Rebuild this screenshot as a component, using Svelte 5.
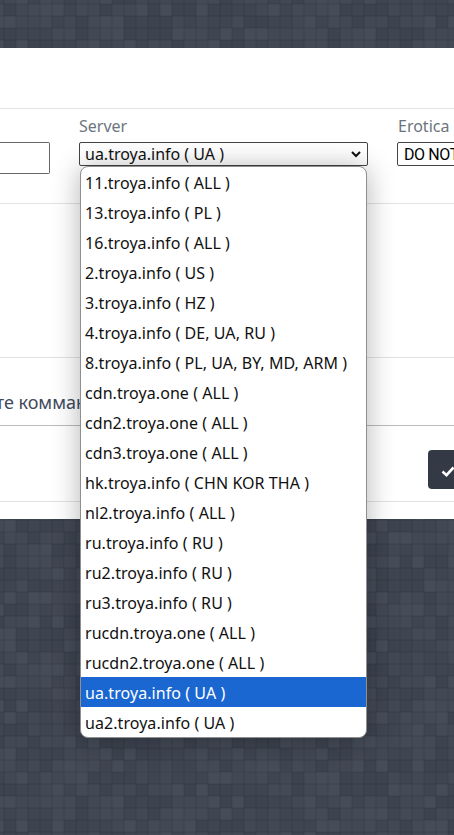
<script lang="ts">
    const servers = [
        "11.troya.info ( ALL )",
        "13.troya.info ( PL )",
        "16.troya.info ( ALL )",
        "2.troya.info ( US )",
        "3.troya.info ( HZ )",
        "4.troya.info ( DE, UA, RU )",
        "8.troya.info ( PL, UA, BY, MD, ARM )",
        "cdn.troya.one ( ALL )",
        "cdn2.troya.one ( ALL )",
        "cdn3.troya.one ( ALL )",
        "hk.troya.info ( CHN KOR THA )",
        "nl2.troya.info ( ALL )",
        "ru.troya.info ( RU )",
        "ru2.troya.info ( RU )",
        "ru3.troya.info ( RU )",
        "rucdn.troya.one ( ALL )",
        "rucdn2.troya.one ( ALL )",
        "ua.troya.info ( UA )",
        "ua2.troya.info ( UA )"
    ]
    const selected = "ua.troya.info ( UA )"

    // background squares, fixed pseudo random shades
    const shades = ["#3f4652", "#424955", "#444b57", "#3d4450", "#464d59"]
    let cells = []
    for(let i = 0; i < 72 * 39; i++) {
        cells.push(shades[(i * 7 + (i % 11) * (i % 5) + (i % 3) * 13) % 5])
    }
</script>

<div class="page">
    <div class="squares">
        {#each cells as c}
            <i style="background:{c}"></i>
        {/each}
    </div>

    <div class="panel">
        <div class="row head"></div>
        <div class="row fields">
            <div class="field first">
                <div class="box"></div>
            </div>
            <div class="field server">
                <span class="label">Server</span>
                <div class="select">
                    <span>ua.troya.info ( UA )</span>
                    <svg width="10" height="7" viewBox="0 0 10 7"><path d="M1 1l4 4 4-4" fill="none" stroke="#111" stroke-width="2"/></svg>
                </div>
            </div>
            <div class="field erotica">
                <span class="label">Erotica</span>
                <div class="select"><span>DO NOT SHOW</span></div>
            </div>
        </div>
        <div class="row empty"></div>
        <div class="row hint"><span>Введите комманду</span></div>
        <div class="row actions">
            <div class="ok">
                <svg width="14" height="11" viewBox="0 0 14 11"><path d="M1.5 5.5l4 3.6 7-7.6" fill="none" stroke="#fff" stroke-width="2.6"/></svg>
            </div>
        </div>
    </div>

    <ul class="dropdown">
        {#each servers as s}
            <li class:active={s == selected}>{s}</li>
        {/each}
    </ul>
</div>

<style>
    :global(body) {
        background: #414854;
    }
    .page {
        position: relative;
        width: 454px;
        height: 835px;
        overflow: hidden;
        padding-top: 48px;
        box-sizing: border-box;
        font-family: "Noto Sans", sans-serif;
    }
    .squares {
        position: absolute;
        inset: -8px 0 0 -8px;
        display: grid;
        grid-template-columns: repeat(39, 12px);
        grid-auto-rows: 12px;
        overflow: hidden;
    }
    .squares i {
        display: block;
        box-shadow: inset 0 0 0 0.5px rgba(0, 0, 0, 0.12);
    }
    .panel {
        position: relative;
        background: #fff;
        height: 471px;
        display: flex;
        flex-direction: column;
    }
    .row {
        border-bottom: 1px solid #e2e2e6;
        flex-shrink: 0;
    }
    .head {
        height: 60px;
    }
    .fields {
        height: 95px;
        display: flex;
        padding-top: 7px;
        box-sizing: border-box;
    }
    .field {
        display: flex;
        flex-direction: column;
    }
    .first {
        width: 79px;
        padding-top: 26px;
    }
    .box {
        width: 49px;
        height: 30px;
        border: 1px solid #666;
        border-left: none;
        border-radius: 0 2px 2px 0;
    }
    .label {
        font-size: 16px;
        line-height: 20px;
        color: #6c757d;
        margin-bottom: 6px;
    }
    .server {
        width: 318px;
    }
    .erotica {
        width: 57px;
    }
    .erotica .label {
        margin-left: 1px;
    }
    .select {
        display: flex;
        align-items: center;
        justify-content: space-between;
        box-sizing: border-box;
        height: 24px;
        padding: 0 6px 0 5px;
        border: 1px solid #444;
        border-radius: 2px;
        font-size: 16px;
        color: #111;
        white-space: nowrap;
    }
    .server .select {
        width: 289px;
    }
    .erotica .select {
        width: 80px;
        padding-left: 6px;
        color: #000;
        font-family: Roboto, sans-serif;
        font-size: 16px;
        letter-spacing: -0.4px;
    }
    .empty {
        height: 153px;
    }
    .hint {
        height: 67px;
        box-sizing: content-box;
        border-bottom-color: #bbb;
        display: flex;
        align-items: center;
        color: #3f4a5c;
        font-size: 18px;
        white-space: nowrap;
    }
    .hint span {
        margin-left: -58px;
        padding-top: 20px;
    }
    .actions {
        height: 75px;
        display: flex;
        justify-content: flex-end;
        align-items: flex-end;
    }
    .ok {
        width: 26px;
        height: 39px;
        margin-bottom: 12px;
        background: #343a45;
        border-radius: 4px 0 0 4px;
        display: flex;
        align-items: center;
        padding: 3px 0 0 13px;
        box-sizing: border-box;
        overflow: hidden;
    }
    .ok svg {
        flex-shrink: 0;
    }
    .dropdown {
        position: absolute;
        left: 80px;
        top: 166px;
        width: 287px;
        margin: 0;
        padding: 0;
        box-sizing: border-box;
        list-style: none;
        background: #fff;
        border: 1px solid #8f8f8f;
        border-radius: 8px;
        box-shadow: 0 2px 28px rgba(0, 0, 0, 0.3);
        overflow: hidden;
    }
    .dropdown li {
        height: 30px;
        line-height: 32px;
        padding-left: 4px;
        font-size: 16px;
        letter-spacing: 0.06px;
        color: #111;
        white-space: nowrap;
    }
    .dropdown li.active {
        background: #1a67d2;
        color: #fff;
    }
</style>
